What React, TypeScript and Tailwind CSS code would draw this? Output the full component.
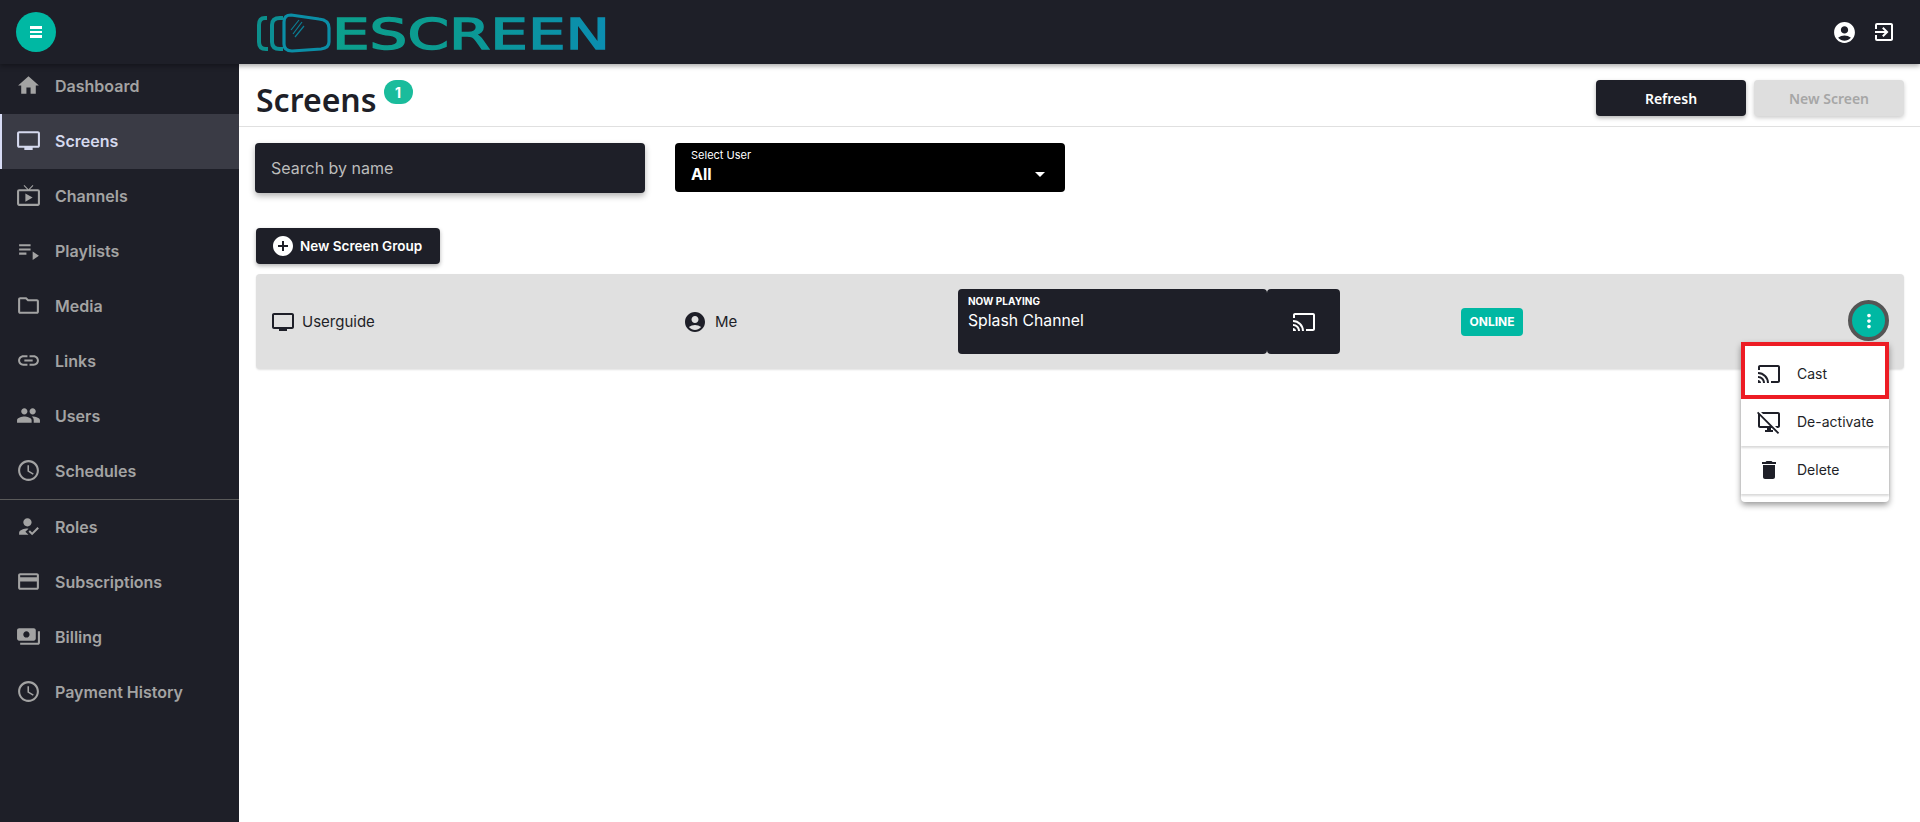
import React from "react";
import {
  MdAccessTime,
  MdAccountCircle,
  MdAddCircle,
  MdCast,
  MdCreditCard,
  MdDelete,
  MdDesktopAccessDisabled,
  MdExitToApp,
  MdHome,
  MdHowToReg,
  MdLink,
  MdLiveTv,
  MdMoreVert,
  MdOutlineFolder,
  MdPayments,
  MdPeople,
  MdPlaylistPlay,
  MdTv,
} from "react-icons/md";

const topNav = [
  { text: "Dashboard", icon: MdHome },
  { text: "Screens", icon: MdTv, active: true },
  { text: "Channels", icon: MdLiveTv },
  { text: "Playlists", icon: MdPlaylistPlay },
  { text: "Media", icon: MdOutlineFolder },
  { text: "Links", icon: MdLink },
  { text: "Users", icon: MdPeople },
  { text: "Schedules", icon: MdAccessTime },
];

const bottomNav = [
  { text: "Roles", icon: MdHowToReg },
  { text: "Subscriptions", icon: MdCreditCard },
  { text: "Billing", icon: MdPayments },
  { text: "Payment History", icon: MdAccessTime },
];

const NavItem = ({ item }: { item: { text: string; icon: React.ElementType; active?: boolean } }) => {
  const Icon = item.icon;
  return (
    <div
      className={`flex h-[55px] items-center gap-[14px] text-[16px] font-semibold ${
        item.active ? "border-l-2 border-[#d8dcf5] bg-[#3a3b45] pl-[14px] text-[#d5d9ee]" : "pl-[16px] text-[#a3a3a3]"
      }`}
    >
      <Icon size={25} className="mt-[-2px]" />
      <span className="mt-[-1px]">{item.text}</span>
    </div>
  );
};

const Logo = () => (
  <svg width="356" height="40" viewBox="0 0 356 40" fill="none" className="overflow-visible">
    <defs>
      <linearGradient id="logoText" gradientUnits="userSpaceOnUse" x1="75" x2="350" y1="0" y2="0">
        <stop offset="0" stopColor="#0c9f8c" />
        <stop offset="0.45" stopColor="#0b9a92" />
        <stop offset="1" stopColor="#0b8db0" />
      </linearGradient>
    </defs>
    <path d="M10 5 H8 Q2 5 2 12 V29 Q2 36 9 36 H11" stroke="#0c8f8c" strokeWidth="4" />
    <path d="M26 5 H23 Q15 5 15 12 V29 Q15 36 23 36 H26" stroke="#0c8f94" strokeWidth="4" />
    <path
      d="M34 2 L62 6 Q72 7 72 15 V29 Q72 35 64 36 L35 38 Q27 38 27 31 V9 Q27 2 34 2 Z"
      stroke="#0b8ea6"
      strokeWidth="3.2"
      fill="#1e1f28"
    />
    <path d="M34 17 L42 7 M36 21 L45 9 M38 24 L47 13" stroke="#0b7f95" strokeWidth="1.2" />
    <text
      x="75"
      y="36"
      fontFamily="'DejaVu Sans', sans-serif"
      fontSize="43"
      fontWeight="400"
      textLength="278"
      lengthAdjust="spacingAndGlyphs"
      fill="url(#logoText)"
      stroke="url(#logoText)"
      strokeWidth="1.4"
    >
      ESCREEN
    </text>
  </svg>
);

const App: React.FC = () => {
  return (
    <div className="flex min-h-screen flex-col bg-white font-['Inter',sans-serif] text-[#1e1f28]">
      <header className="relative z-10 flex h-[64px] items-center justify-between bg-[#1e1f28] pl-[16px] pr-[24px] shadow-[0_2px_5px_rgba(0,0,0,0.35)]">
        <div className="flex items-center">
          <button className="flex h-[40px] w-[40px] flex-col items-center justify-center gap-[2px] rounded-full bg-[#00b8a3]">
            <span className="h-[2.5px] w-[12px] bg-white" />
            <span className="h-[2.5px] w-[12px] bg-white" />
            <span className="h-[2.5px] w-[12px] bg-white" />
          </button>
          <div className="ml-[201px] mt-[1px]">
            <Logo />
          </div>
        </div>
        <div className="flex items-center gap-[15px] text-white">
          <MdAccountCircle size={25} />
          <MdExitToApp size={24} />
        </div>
      </header>

      <div className="flex flex-1">
        <aside className="mt-[-5px] w-[239px] shrink-0 bg-[#1e1f28]">
          {topNav.map((item) => (
            <NavItem key={item.text} item={item} />
          ))}
          <div className="h-px bg-[#5a5a5a]" />
          {bottomNav.map((item) => (
            <NavItem key={item.text} item={item} />
          ))}
        </aside>

        <main className="flex-1">
          <div className="flex h-[63px] items-start justify-between border-b border-[#e0e0e0] pl-[17px] pr-[16px] pt-[16px]">
            <div className="flex items-start gap-[7px]">
              <h1 className="font-['Noto_Sans',sans-serif] text-[32px] font-semibold leading-[40px]">Screens</h1>
              <span className="flex h-[24px] w-[29px] items-center justify-center rounded-full bg-[#1abc9c] text-[14px] font-bold text-white">
                1
              </span>
            </div>
            <div className="flex gap-[8px] font-['Noto_Sans',sans-serif] text-[14px] font-semibold">
              <button className="h-[36px] w-[150px] rounded bg-[#1e1f28] text-white shadow-[0_2px_4px_rgba(0,0,0,0.3)]">
                Refresh
              </button>
              <button className="h-[36px] w-[150px] rounded bg-[#dedede] text-[#a6a6a6] shadow-[0_2px_4px_rgba(0,0,0,0.2)]">
                New Screen
              </button>
            </div>
          </div>

          <div className="pl-[17px] pr-[16px]">
            <div className="ml-[-1px] flex items-start gap-[30px] pt-[16px]">
              <input
                placeholder="Search by name"
                className="h-[50px] w-[390px] rounded bg-[#1e1f28] px-[16px] text-[16px] text-white shadow-[0_3px_6px_rgba(0,0,0,0.3)] outline-none placeholder:text-[#bcbcbc]"
              />
              <div className="relative h-[49px] w-[390px] rounded bg-black px-[16px] pt-[3px] text-white">
                <div className="text-[11px] leading-[18px]">Select User</div>
                <div className="text-[16px] font-bold leading-[20px]">All</div>
                <span className="absolute right-[20px] top-[29px] h-0 w-0 border-x-[5px] border-t-[5px] border-x-transparent border-t-white" />
              </div>
            </div>

            <button className="mt-[35px] flex h-[36px] w-[184px] items-center gap-[5px] rounded bg-[#1e1f28] pl-[17px] text-[13.5px] font-semibold text-white shadow-[0_2px_4px_rgba(0,0,0,0.3)]">
              <MdAddCircle size={24} className="ml-[-2px]" />
              New Screen Group
            </button>

            <div className="relative mt-[10px] flex h-[95px] items-center rounded bg-[#e0e0e0] text-[15px] shadow-[0_1px_2px_rgba(0,0,0,0.12)]">
              <div className="flex w-[412px] items-center gap-[7px] pl-[15px]">
                <MdTv size={24} />
                <span className="mt-[1px]">Userguide</span>
              </div>
              <div className="flex w-[290px] items-center gap-[8px] pl-[15px]">
                <MdAccountCircle size={24} />
                <span className="mt-[1px]">Me</span>
              </div>
              <div className="h-[65px] w-[309px] rounded bg-[#1e1f28] px-[10px] pt-[4px] text-white">
                <div className="text-[10px] font-bold leading-[16px]">NOW PLAYING</div>
                <div className="mt-[1px] text-[15.75px] leading-[22px]">Splash Channel</div>
              </div>
              <div className="flex h-[65px] w-[73px] items-center justify-center rounded bg-[#1e1f28] text-white">
                <MdCast size={24} />
              </div>
              <div className="ml-[121px] flex h-[28px] w-[62px] items-center justify-center rounded bg-[#00b8a3] text-[12px] font-bold text-white">
                ONLINE
              </div>
              <button className="absolute right-[15px] top-[26px] flex h-[41px] w-[41px] items-center justify-center rounded-full border-[4px] border-[#555555] bg-[#00b8a3] text-white">
                <MdMoreVert size={22} />
              </button>

              <div className="absolute right-[15px] top-[68px] z-20 w-[148px] rounded bg-white py-[8px] text-[14px] shadow-[0_3px_6px_rgba(0,0,0,0.4)]">
                <div className="flex h-[48px] items-center gap-[16px] pl-[16px]">
                  <MdCast size={24} />
                  <span className="mb-[2px]">Cast</span>
                </div>
                <div className="flex h-[48px] items-center gap-[16px] pl-[16px] shadow-[0_2px_2px_rgba(0,0,0,0.15)]">
                  <MdDesktopAccessDisabled size={24} />
                  <span className="mb-[2px]">De-activate</span>
                </div>
                <div className="flex h-[48px] items-center gap-[16px] pl-[16px] shadow-[0_2px_2px_rgba(0,0,0,0.15)]">
                  <MdDelete size={24} />
                  <span className="mb-[2px]">Delete</span>
                </div>
                <div className="absolute left-0 right-0 top-0 h-[57px] border-[4px] border-[#ed1c24]" />
              </div>
            </div>
          </div>
        </main>
      </div>
    </div>
  );
};

export default App;
